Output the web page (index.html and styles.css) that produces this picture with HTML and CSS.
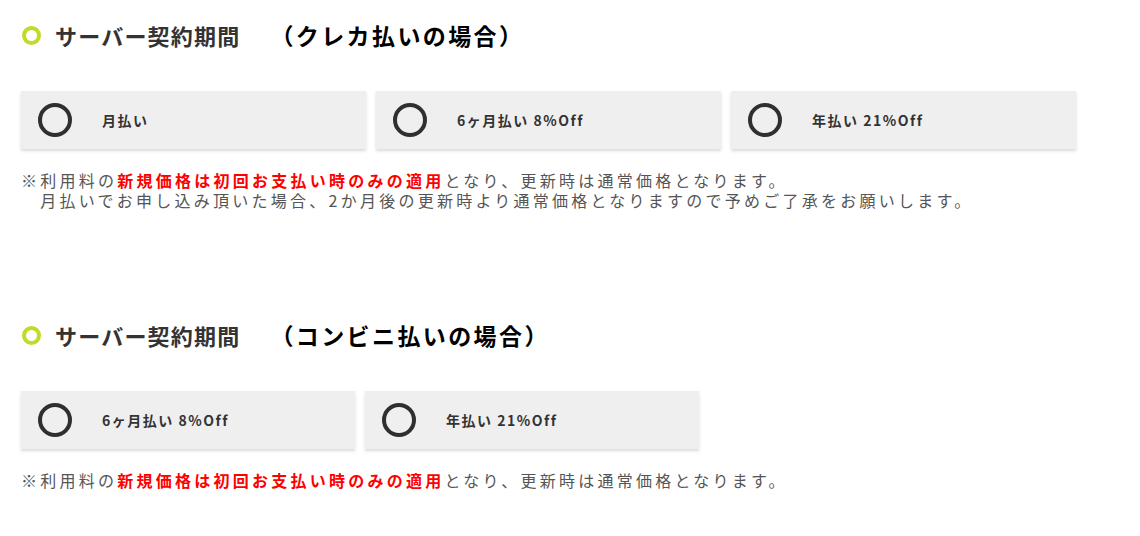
FILE: index.html
```html
<html>
    <head>
        <meta charset="utf-8">
        <title>サーバー契約期間</title>
        <link rel="stylesheet" href="styles.css">
    </head>
    <body>
        <div class="plan-area">
            <!-- クレカ払い -->
            <div class="plan-section">
                <h2 class="plan-title"><span class="title-mark"></span><span class="title-main">サーバー契約期間</span><span class="title-sub">（クレカ払いの場合）</span></h2>
                <ul class="plan-list plan-list-3">
                    <li class="plan-item"><span class="radio"></span><span class="plan-label">月払い</span></li>
                    <li class="plan-item"><span class="radio"></span><span class="plan-label">6ヶ月払い 8%Off</span></li>
                    <li class="plan-item"><span class="radio"></span><span class="plan-label">年払い 21%Off</span></li>
                </ul>
                <p class="plan-note">※利用料の<strong>新規価格は初回お支払い時のみの適用</strong>となり、更新時は通常価格となります。<br>　月払いでお申し込み頂いた場合、2か月後の更新時より通常価格となりますので予めご了承をお願いします。</p>
            </div>
            <!-- コンビニ払い -->
            <div class="plan-section plan-section-2">
                <h2 class="plan-title"><span class="title-mark"></span><span class="title-main">サーバー契約期間</span><span class="title-sub">（コンビニ払いの場合）</span></h2>
                <ul class="plan-list plan-list-2">
                    <li class="plan-item"><span class="radio"></span><span class="plan-label">6ヶ月払い 8%Off</span></li>
                    <li class="plan-item"><span class="radio"></span><span class="plan-label">年払い 21%Off</span></li>
                </ul>
                <p class="plan-note">※利用料の<strong>新規価格は初回お支払い時のみの適用</strong>となり、更新時は通常価格となります。</p>
            </div>
        </div>
    </body>
</html>
```

FILE: styles.css
```css
*{
    box-sizing: border-box;
}
body{
    margin: 0;
    background: #fff;
    font-family: "Noto Sans CJK JP", "Noto Sans", sans-serif;
    color: #333;
}
div.plan-area{
    padding: 18px 0 0 21px;
}
div.plan-section-2{
    margin-top: 108px;
}
h2.plan-title{
    display: flex;
    align-items: center;
    margin: 0;
    height: 34px;
    font-size: 22px;
    font-weight: 700;
}
span.title-mark{
    width: 19px;
    height: 19px;
    margin: 0 14px 0 1px;
    border: 4px solid #c3d92b;
    border-radius: 50%;
}
span.title-main{
    letter-spacing: 1.2px;
    color: #333;
}
span.title-sub{
    margin-left: 30px;
    font-size: 23px;
    letter-spacing: 2.4px;
    color: #000;
}
ul.plan-list{
    list-style: none;
    display: flex;
    gap: 10px;
    margin: 39px 0 0 0;
    padding: 0;
}
li.plan-item{
    display: flex;
    align-items: center;
    height: 58px;
    padding-left: 17px;
    background: #efefef;
    box-shadow: 0 2px 3px rgba(0, 0, 0, .15);
}
ul.plan-list-3 li.plan-item{
    width: 345px;
}
ul.plan-list-2 li.plan-item{
    width: 334px;
}
span.radio{
    width: 34px;
    height: 34px;
    border: 4.5px solid #2f2f2f;
    border-radius: 50%;
    flex-shrink: 0;
}
span.plan-label{
    margin-left: 30px;
    font-size: 14px;
    font-weight: 700;
    letter-spacing: 1.5px;
    color: #333;
}
p.plan-note{
    margin: 21px 0 0 0;
    font-size: 16px;
    line-height: 20px;
    letter-spacing: 3.25px;
    color: #555;
    font-weight: 400;
    white-space: nowrap;
}
p.plan-note strong{
    color: #f00;
    font-weight: 700;
}
```
